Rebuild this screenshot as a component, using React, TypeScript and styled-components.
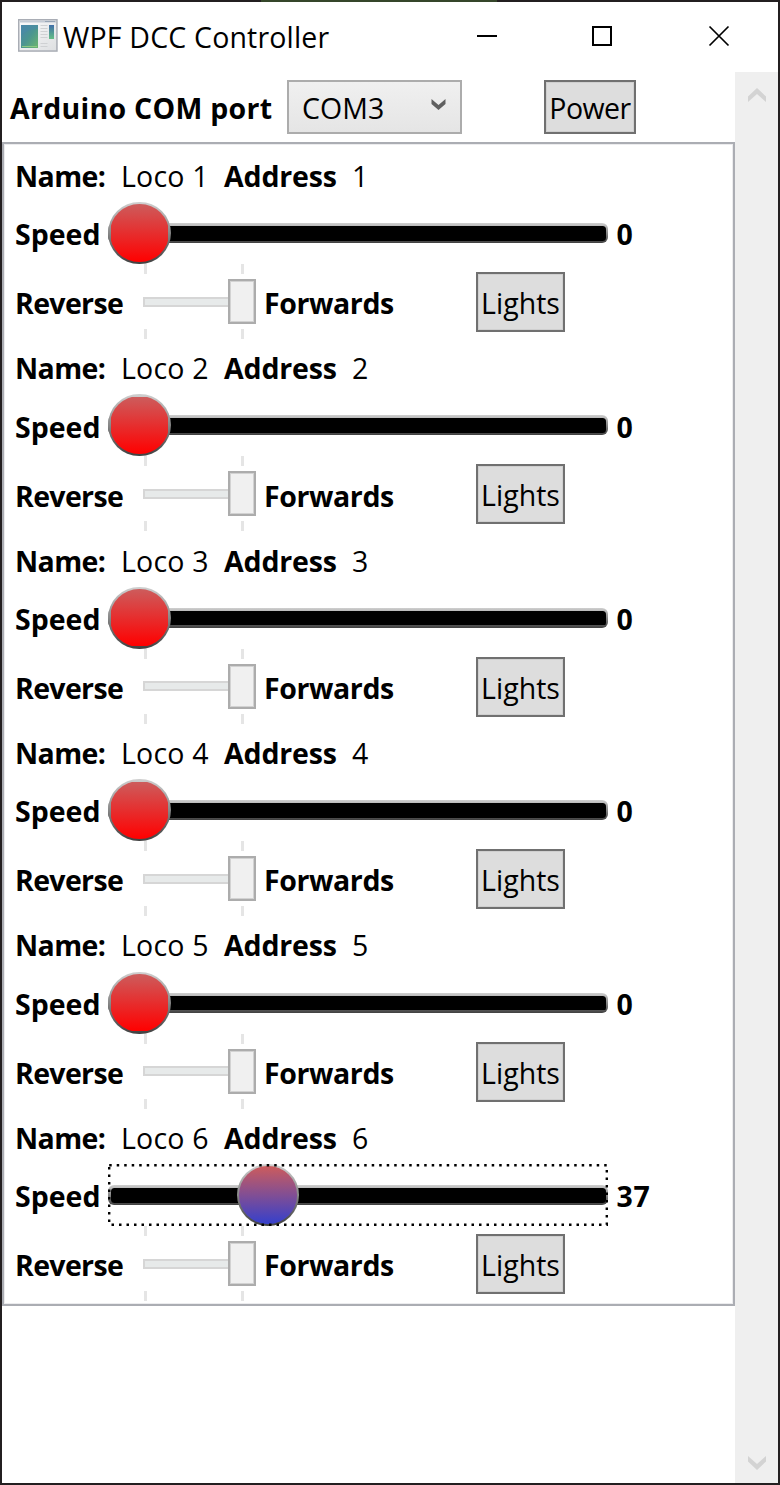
import React from "react";
import styled, { createGlobalStyle } from "styled-components";

const GlobalStyle = createGlobalStyle`
  * { box-sizing: border-box; }
  body { margin: 0; background: #fff; }
`;

const Window = styled.div`
  position: relative;
  width: 780px;
  height: 1485px;
  display: flex;
  flex-direction: column;
  border: 2px solid #231f20;
  background: #fff;
  color: #000;
  font-family: "Open Sans", "Noto Sans", sans-serif;
  font-size: 28.5px;
  line-height: 40px;
  white-space: nowrap;
`;

const EdgeGlow = styled.div`
  position: absolute;
  top: -2px;
  left: 259px;
  width: 236px;
  height: 2px;
  background: #35462a;
`;

const Text = styled.span<{ $bold?: boolean; $w?: number; $ls?: number }>`
  flex: none;
  font-weight: ${(p) => (p.$bold ? 700 : 400)};
  width: ${(p) => (p.$w ? `${p.$w}px` : "auto")};
  letter-spacing: ${(p) => p.$ls ?? 0}px;
`;

const TitleBar = styled.header`
  display: flex;
  flex: none;
  height: 70px;
  padding: 0 48px 0 16px;
`;

const AppIcon = styled.svg`
  flex: none;
  margin: 17px 5px 0 0;
`;

const TitleText = styled(Text)`
  padding-top: 15px;
`;

const WindowButtons = styled.div`
  display: flex;
  gap: 94px;
  margin: 23px 0 0 auto;
  height: 22px;
`;

const Body = styled.div`
  display: flex;
  flex: 1;
  min-height: 0;
`;

const Main = styled.main`
  width: 733px;
`;

const Toolbar = styled.div`
  display: flex;
  height: 70px;
  padding: 8px 0 8px 8px;
`;

const ToolbarLabel = styled(Text)`
  padding-top: 8px;
`;

const ComboBox = styled.div`
  display: flex;
  align-items: flex-start;
  justify-content: space-between;
  width: 175px;
  height: 54px;
  margin-right: 82px;
  padding: 6px 14px 0 13px;
  border: 2px solid #acacac;
  background: linear-gradient(#f0f0f0, #e5e5e5);
  svg { margin-top: 11px; }
`;

const Button = styled.button<{ $w: number; $h: number }>`
  width: ${(p) => p.$w}px;
  height: ${(p) => p.$h}px;
  flex: none;
  padding: 2px 0 0;
  border: 2px solid #707070;
  border-radius: 0;
  background: #ddd;
  box-shadow: inset 0 0 0 1px #cfcfcf;
  color: #000;
  font: inherit;
  display: flex;
  align-items: center;
  justify-content: center;
`;

const LocoList = styled.div`
  height: 1164px;
  padding: 2.8px 0 0 11px;
  border: 2px solid #abadb3;
  box-shadow: inset 0 0 0 1px #ececee;
`;

const Loco = styled.section`
  height: 192.4px;
`;

const NameRow = styled.div`
  display: flex;
  height: 55.3px;
  padding-top: 9px;
`;

const SpeedRow = styled.div`
  display: flex;
  height: 62px;
`;

const RowLabel = styled(Text)`
  padding-top: 12.1px;
`;

const SpeedSlider = styled.div`
  position: relative;
  flex: none;
  display: flex;
  align-items: center;
  width: 500px;
  height: 62px;
  margin-right: 8.5px;
`;

const SpeedTrack = styled.div`
  width: 100%;
  height: 20px;
  padding: 2.5px;
  border-radius: 6px;
  background:
    linear-gradient(#000, #000) content-box,
    linear-gradient(#cfcfcf, #404040) border-box;
`;

const SpeedThumb = styled.div<{ $moving: boolean }>`
  position: absolute;
  top: 0;
  width: 62.5px;
  height: 62px;
  padding: 2.4px;
  border-radius: 50%;
  background:
    linear-gradient(${(p) => (p.$moving ? "#cd5c5c, #3540cc" : "#cd5c5c, #ff0000")}) content-box,
    linear-gradient(#d0d0d0, #404040) border-box;
`;

const FocusRect = styled.svg`
  position: absolute;
  inset: 0;
`;

const DirectionRow = styled.div`
  display: flex;
  height: 75px;
`;

const DirectionLabel = styled(Text)`
  padding-top: 19.1px;
`;

const DirectionSlider = styled.div`
  position: relative;
  flex: none;
  width: 113px;
  height: 75px;
  margin-right: 8px;
  display: flex;
  flex-direction: column;
  justify-content: space-between;
`;

const Ticks = styled.div`
  display: flex;
  justify-content: space-between;
  width: 99.5px;
  height: 10px;
  margin-left: 1px;
  &::before, &::after { content: ""; width: 2.5px; background: #e5e5e5; }
`;

const DirectionTrack = styled.div`
  height: 10px;
  width: 100px;
  border: 2px solid #d6d6d6;
  background: #e7eaea;
`;

const DirectionThumb = styled.div`
  position: absolute;
  right: 0;
  top: 15px;
  width: 28px;
  height: 45px;
  border: 2px solid #acacac;
  background: #f0f0f0;
  box-shadow: inset 0 0 0 1px #d2d2d2;
`;

const LightsSlot = styled.div`
  padding-top: 7.9px;
`;

const ScrollBar = styled.aside`
  display: flex;
  flex-direction: column;
  justify-content: space-between;
  align-items: center;
  width: 43px;
  padding: 16px 0 13px;
  background: #efefef;
`;

const MAX_SPEED = 126;
const locos = [0, 0, 0, 0, 0, 37].map((speed, i) => ({ id: i + 1, speed }));

function Chevron({ up }: { up?: boolean }) {
  return (
    <svg width="18" height="14" viewBox="0 0 18 14">
      <path d={up ? "M0 8.5 9 0 18 8.5V14L9 6 0 14Z" : "M0 0 9 8 18 0V5.5L9 14 0 5.5Z"} fill="#d3d3d3" />
    </svg>
  );
}

function WindowIcon() {
  return (
    <AppIcon width="40" height="33" viewBox="0 0 40 33">
      <defs>
        <linearGradient id="pane" x1="0" y1="0" x2="1" y2="1">
          <stop offset="0" stopColor="#4b83ad" />
          <stop offset="0.5" stopColor="#4b9590" />
          <stop offset="1" stopColor="#6cb66c" />
        </linearGradient>
        <linearGradient id="side" x1="0" y1="0" x2="0" y2="1">
          <stop offset="0" stopColor="#416fa8" />
          <stop offset="1" stopColor="#63bf85" />
        </linearGradient>
        <linearGradient id="frame" x1="0" y1="0" x2="1" y2="1">
          <stop offset="0" stopColor="#fcfcfc" />
          <stop offset="1" stopColor="#dddfe1" />
        </linearGradient>
      </defs>
      <rect x="0.75" y="0.75" width="38.2" height="31.3" fill="url(#frame)" stroke="#a9adb5" strokeWidth="1.5" />
      <path d="M2 2.5H38" stroke="#c3cad4" strokeWidth="2" />
      <path d="M27 2.5H37" stroke="#98a5b5" strokeWidth="1" />
      <rect x="3" y="6" width="17" height="23" fill="url(#pane)" />
      <path d="M3 16Q10 10 20 10V6H3Z" fill="#4a8aa6" opacity="0.6" />
      <path d="M4 27.5H19" stroke="#8bc982" />
      <path d="M22.5 6.5h7M22.5 9.5h7M22.5 12.5h7M22.5 15.5h7M22.5 18.5h7M22.5 24.5h7M22.5 27.5h7" stroke="#cfd1d3" />
      <rect x="31" y="6" width="5" height="14" fill="url(#side)" />
    </AppIcon>
  );
}

function LocoPanel({ id, speed }: { id: number; speed: number }) {
  const active = speed > 0;
  return (
    <Loco>
      <NameRow>
        <Text $bold $w={106} $ls={-0.6}>Name:</Text>
        <Text $w={103} $ls={0.2}>Loco {id}</Text>
        <Text $bold $w={128} $ls={-0.15}>Address</Text>
        <Text>{id}</Text>
      </NameRow>
      <SpeedRow>
        <RowLabel $bold $w={93}>Speed</RowLabel>
        <SpeedSlider>
          <SpeedTrack />
          <SpeedThumb $moving={active} style={{ left: 0.3 + (speed / MAX_SPEED) * 438 }} />
          {active && (
            <FocusRect width="500" height="62">
              <rect x="1.2" y="1.2" width="497.6" height="59.6" fill="none" stroke="#000" strokeWidth="2.4" strokeDasharray="2.5 5" />
            </FocusRect>
          )}
        </SpeedSlider>
        <RowLabel $bold $ls={0.8}>{speed}</RowLabel>
      </SpeedRow>
      <DirectionRow>
        <DirectionLabel $bold $w={128} $ls={-0.65}>Reverse</DirectionLabel>
        <DirectionSlider>
          <Ticks />
          <DirectionTrack />
          <Ticks />
          <DirectionThumb />
        </DirectionSlider>
        <DirectionLabel $bold $w={212} $ls={-0.4}>Forwards</DirectionLabel>
        <LightsSlot>
          <Button $w={89} $h={60}><Text>Lights</Text></Button>
        </LightsSlot>
      </DirectionRow>
    </Loco>
  );
}

export default function App() {
  return (
    <>
      <GlobalStyle />
      <Window>
        <EdgeGlow />
        <TitleBar>
          <WindowIcon />
          <TitleText $ls={0.18}>WPF DCC Controller</TitleText>
          <WindowButtons>
            <svg width="22" height="22"><path d="M1 11H21" stroke="#000" strokeWidth="2" /></svg>
            <svg width="22" height="22"><rect x="1" y="2" width="18" height="18" fill="none" stroke="#000" strokeWidth="2" /></svg>
            <svg width="22" height="22"><path d="M1.5 1.5 20.5 20.5M20.5 1.5 1.5 20.5" stroke="#000" strokeWidth="1.7" /></svg>
          </WindowButtons>
        </TitleBar>
        <Body>
          <Main>
            <Toolbar>
              <ToolbarLabel $bold $w={277} $ls={0.27}>Arduino COM port</ToolbarLabel>
              <ComboBox>
                <Text $ls={0.1}>COM3</Text>
                <svg width="15" height="12"><path d="M0.5 0 7.5 6 14.5 0V5L7.5 11 0.5 5Z" fill="#606060" /></svg>
              </ComboBox>
              <Button $w={92} $h={54}><Text $ls={-0.5}>Power</Text></Button>
            </Toolbar>
            <LocoList>
              {locos.map((l) => <LocoPanel key={l.id} {...l} />)}
            </LocoList>
          </Main>
          <ScrollBar>
            <Chevron up />
            <Chevron />
          </ScrollBar>
        </Body>
      </Window>
    </>
  );
}
